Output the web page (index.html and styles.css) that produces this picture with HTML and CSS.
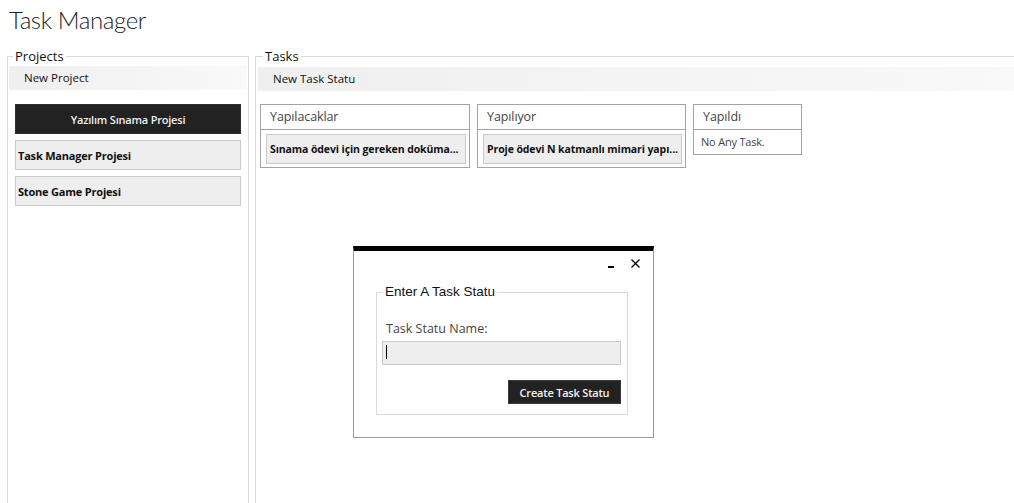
FILE: index.html
```html
<!DOCTYPE html>
<html lang="tr">
<head>
<meta charset="utf-8">
<title>Task Manager</title>
<link rel="stylesheet" href="styles.css">
</head>
<body>
<header class="app-header">
  <h1 class="app-title">Task Manager</h1>
</header>
<main class="workspace">
  <fieldset class="group projects">
    <legend class="group-legend">Projects</legend>
    <div class="toolbar">New Project</div>
    <ul class="project-list">
      <li><button class="project-btn active">Yazılım Sınama Projesi</button></li>
      <li><button class="project-btn">Task Manager Projesi</button></li>
      <li><button class="project-btn">Stone Game Projesi</button></li>
    </ul>
  </fieldset>
  <fieldset class="group tasks">
    <legend class="group-legend">Tasks</legend>
    <div class="toolbar">New Task Statu</div>
    <div class="board">
      <section class="column">
        <h2 class="column-title">Yapılacaklar</h2>
        <div class="column-body">
          <div class="task-card">Sınama ödevi için gereken doküma...</div>
        </div>
      </section>
      <section class="column column-mid">
        <h2 class="column-title">Yapılıyor</h2>
        <div class="column-body">
          <div class="task-card">Proje ödevi N katmanlı mimari yapı...</div>
        </div>
      </section>
      <section class="column column-empty">
        <h2 class="column-title">Yapıldı</h2>
        <div class="empty-note">No Any Task.</div>
      </section>
    </div>
  </fieldset>
</main>

<div class="dialog">
  <div class="dialog-bar">
    <span class="win-btn">
      <svg width="6" height="9" viewBox="0 0 6 9"><rect x="0" y="7" width="6" height="2" fill="#000"/></svg>
    </span>
    <span class="win-btn">
      <svg width="9" height="9" viewBox="0 0 9 9"><path d="M0.5 0.5 L8.5 8.5 M8.5 0.5 L0.5 8.5" stroke="#000" stroke-width="1.3" fill="none"/></svg>
    </span>
  </div>
  <fieldset class="dialog-group">
    <legend class="dialog-legend">Enter A Task Statu</legend>
    <div class="field-label">Task Statu Name:</div>
    <div class="text-input"><span class="caret"></span></div>
    <div class="dialog-actions">
      <button class="dark-btn">Create Task Statu</button>
    </div>
  </fieldset>
</div>
</body>
</html>
```

FILE: styles.css
```css
html, body {
  margin: 0;
  padding: 0;
  background: #fff;
  overflow: hidden;
}

body {
  font-family: "Open Sans", "Noto Sans", sans-serif;
  color: #111;
  height: 503px;
  position: relative;
}

.app-header {
  height: 49px;
  box-sizing: border-box;
  padding: 3px 0 0 9px;
}

.app-title {
  margin: 0;
  font-family: Lato, "Open Sans", sans-serif;
  font-size: 24px;
  font-weight: 300;
  line-height: 34px;
  color: #222;
  letter-spacing: -0.4px;
}

.workspace {
  display: flex;
  gap: 6px;
  padding-left: 7px;
}

.group {
  margin: 0;
  border: 1px solid #d9d9d9;
  min-width: 0;
  height: 470px;
  box-sizing: border-box;
}

.group-legend {
  font-size: 13px;
  line-height: 14px;
  padding: 0 2px;
  color: #111;
}

.projects {
  flex: none;
  width: 242px;
  padding: 3px 1px 0;
}

.projects .group-legend {
  margin-left: 4px;
}

.tasks {
  flex: 1;
  margin-right: -10px;
  padding: 4px 2px 0;
}

.tasks .group-legend {
  margin-left: 5px;
}

.toolbar {
  height: 24px;
  line-height: 24px;
  font-size: 11.5px;
  padding-left: 15px;
  background: linear-gradient(to right, #efefef, #f9f9f9);
  color: #111;
}

.project-list {
  list-style: none;
  margin: 14px 0 0;
  padding: 0 6px;
  display: flex;
  flex-direction: column;
  gap: 6px;
}

.project-btn {
  display: block;
  width: 100%;
  height: 30px;
  box-sizing: border-box;
  border: 1px solid #cacaca;
  background: #eeeeee;
  font-family: "Open Sans", "Noto Sans", sans-serif;
  font-size: 11px;
  font-weight: 700;
  color: #111;
  text-align: left;
  padding: 0 2px;
  letter-spacing: -0.2px;
}

.project-btn.active {
  background: #222;
  border-color: #2e2e2e;
  color: #eee;
  text-align: center;
  font-weight: 600;
}

.board {
  display: flex;
  align-items: flex-start;
  gap: 7px;
  margin-top: 13px;
  padding-left: 2px;
}

.column {
  width: 210px;
  box-sizing: border-box;
  border: 1px solid #a3a3a3;
}

.column-mid {
  width: 209px;
}

.column-title {
  margin: 0;
  height: 24px;
  line-height: 24px;
  border-bottom: 1px solid #a3a3a3;
  font-size: 12.5px;
  font-weight: 400;
  color: #444;
  padding-left: 9px;
  letter-spacing: -0.1px;
}

.column-body {
  padding: 4px 3px 3px 5px;
}

.task-card {
  width: 200px;
  height: 30px;
  box-sizing: border-box;
  border: 1px solid #cacaca;
  background: #eeeeee;
  font-size: 10.5px;
  font-weight: 700;
  line-height: 28px;
  padding: 0 3px;
  white-space: nowrap;
  overflow: hidden;
  color: #111;
  letter-spacing: -0.1px;
}

.column-mid .task-card {
  width: 199px;
}

.column-empty {
  width: 109px;
}

.empty-note {
  height: 24px;
  line-height: 24px;
  font-size: 11px;
  color: #444;
  padding-left: 7px;
  letter-spacing: -0.2px;
}

/* dialog */
.dialog {
  position: absolute;
  left: 353px;
  top: 246px;
  width: 301px;
  height: 192px;
  box-sizing: border-box;
  background: #fff;
  border: 1px solid #999;
  border-top: 5px solid #000;
}

.dialog-bar {
  height: 34px;
  box-sizing: border-box;
  display: flex;
  justify-content: flex-end;
  align-items: flex-start;
  gap: 17px;
  padding: 8px 13px 0 0;
}

.win-btn {
  display: block;
  line-height: 0;
}

.dialog-group {
  margin: 0 0 0 22px;
  width: 252px;
  height: 130px;
  box-sizing: border-box;
  border: 1px solid #d9d9d9;
  padding: 0 5px 0;
}

.dialog-legend {
  font-family: "Liberation Sans", Arial, sans-serif;
  font-size: 13.5px;
  line-height: 14px;
  padding: 0 2px;
  margin-left: 1px;
  color: #111;
}

.field-label {
  margin-top: 21px;
  font-size: 12.5px;
  line-height: 18px;
  color: #444;
  padding-left: 4px;
}

.text-input {
  margin-top: 3px;
  width: 239px;
  height: 24px;
  box-sizing: border-box;
  border: 1px solid #cacaca;
  background: #eeeeee;
  padding: 3px 0 0 3px;
}

.caret {
  display: block;
  width: 1px;
  height: 14px;
  background: #000;
}

.dialog-actions {
  display: flex;
  justify-content: flex-end;
  width: 239px;
  margin-top: 15px;
}

.dark-btn {
  width: 113px;
  height: 24px;
  box-sizing: border-box;
  background: #222;
  border: 1px solid #3a3a3a;
  color: #f2f2f2;
  font-family: "Open Sans", "Noto Sans", sans-serif;
  font-size: 11px;
  font-weight: 600;
  padding: 0;
  letter-spacing: -0.2px;
}
```
